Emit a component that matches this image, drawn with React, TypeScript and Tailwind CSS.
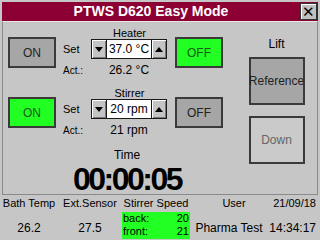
import React from "react";

const font = { fontFamily: '"Liberation Sans", Arial, sans-serif' };

function Spin({ value }: { value: string }) {
  return (
    <div className="flex h-[20px] w-[76px] border border-[#1a1a1a] bg-white">
      <div className="flex w-[15px] items-center justify-center border-r border-[#1a1a1a] bg-[#c4c4c4] shadow-[inset_1px_1px_0_#fff,inset_-1px_-1px_0_#777]">
        <div className="h-0 w-0 border-x-[4px] border-t-[5px] border-x-transparent border-t-black" />
      </div>
      <div className="flex flex-1 items-center justify-center text-[12px] text-black">{value}</div>
      <div className="flex w-[15px] items-center justify-center border-l border-[#1a1a1a] bg-[#c4c4c4] shadow-[inset_1px_1px_0_#fff,inset_-1px_-1px_0_#777]">
        <div className="h-0 w-0 border-x-[4px] border-b-[5px] border-x-transparent border-b-black" />
      </div>
    </div>
  );
}

function Btn({ label, green, light, className = "" }: { label: string; green?: boolean; light?: boolean; className?: string }) {
  const bg = green ? "bg-[#22ff22] text-[#1c5a1c]" : light ? "bg-[#cacaca] text-[#666]" : "bg-[#a6a6a6] text-[#222]";
  return (
    <div className={`flex items-center justify-center border-2 border-[#3a3a3a] text-[12px] ${bg} ${className}`}>
      {label}
    </div>
  );
}

function Group({ title, value, actual, onGreen, offGreen }: { title: string; value: string; actual: string; onGreen?: boolean; offGreen?: boolean }) {
  return (
    <div className="flex items-start">
      <Btn label="ON" green={onGreen} className="ml-[5px] mt-[9px] h-[31px] w-[48px]" />
      <div className="ml-[6px] w-[106px]">
        <div className="h-[11px] pl-[29px] text-center text-[11px] leading-[11px] text-black">{title}</div>
        <div className="flex h-[20px] items-center">
          <span className="w-[29px] pl-[1px] text-[11px] text-black">Set</span>
          <Spin value={value} />
        </div>
        <div className="flex h-[22px] items-center">
          <span className="w-[29px] pl-[1px] text-[10px] text-black">Act.:</span>
          <span className="w-[76px] text-center text-[12px] text-black">{actual}</span>
        </div>
      </div>
      <Btn label="OFF" green={offGreen} className="ml-[7px] mt-[9px] h-[31px] w-[48px]" />
    </div>
  );
}

export default function App() {
  return (
    <div className="h-[240px] w-[320px] overflow-hidden bg-[#c6c6c6] pt-[2px]" style={font}>
      {/* title bar */}
      <div className="mx-[2px] flex h-[19px] items-center bg-[#8c0033]">
        <div className="flex-1 text-center text-[14px] font-bold text-white">PTWS D620 Easy Mode</div>
        <div className="mr-[1px] flex h-[17px] w-[17px] items-center justify-center border border-[#333] bg-[#c0c0c0] text-[15px] leading-none text-black shadow-[inset_1px_1px_0_#fff]">
          ✕
        </div>
      </div>

      {/* main panel */}
      <div className="mx-[2px] flex h-[174px] border-x border-b border-[#8a8a8a] border-t border-t-[#e6e6e6]">
        <div className="w-[240px] pt-[6px]">
          <Group title="Heater" value="37.0 °C" actual="26.2 °C" offGreen />
          <div className="mt-[7px]">
            <Group title="Stirrer" value="20 rpm" actual="21 rpm" onGreen />
          </div>
          <div className="ml-[58px] mt-[9px] h-[48px] w-[132px] text-center text-black">
            <div className="text-[12px] leading-[11px]">Time</div>
            <div className="text-[32px] font-bold leading-[37px] tracking-[-2.5px]">00:00:05</div>
          </div>
        </div>
        <div className="ml-[6px] flex w-[55px] flex-col items-center pt-[15px]">
          <div className="text-[12px] leading-[14px] text-black">Lift</div>
          <Btn label="Reference" className="mt-[6px] h-[48px] w-[56px] text-[11px]" />
          <Btn label="Down" light className="mt-[11px] h-[48px] w-[56px]" />
        </div>
      </div>

      {/* status bar */}
      <div className="flex text-[11px] text-black">
        <div className="w-[58px] text-center">
          <div className="h-[17px] leading-[17px]">Bath Temp</div>
          <div className="h-[27px] pt-[7px] text-[12px]">26.2</div>
        </div>
        <div className="w-[64px] text-center">
          <div className="h-[17px] leading-[17px]">Ext.Sensor</div>
          <div className="h-[27px] pt-[7px] text-[12px]">27.5</div>
        </div>
        <div className="w-[68px]">
          <div className="h-[17px] text-center leading-[17px]">Stirrer Speed</div>
          <div className="h-[27px] bg-[#22ff22] px-[1px] text-[11px] leading-[13px]">
            <div className="flex justify-between"><span>back:</span><span>20</span></div>
            <div className="flex justify-between"><span>front:</span><span>21</span></div>
          </div>
        </div>
        <div className="w-[78px] text-center">
          <div className="h-[17px] pl-[10px] leading-[17px]">User</div>
          <div className="h-[27px] pt-[7px] text-[12px]">Pharma Test</div>
        </div>
        <div className="w-[48px] text-right">
          <div className="h-[17px] leading-[17px]">21/09/18</div>
          <div className="h-[27px] pt-[7px] text-[12px]">14:34:17</div>
        </div>
      </div>
    </div>
  );
}
